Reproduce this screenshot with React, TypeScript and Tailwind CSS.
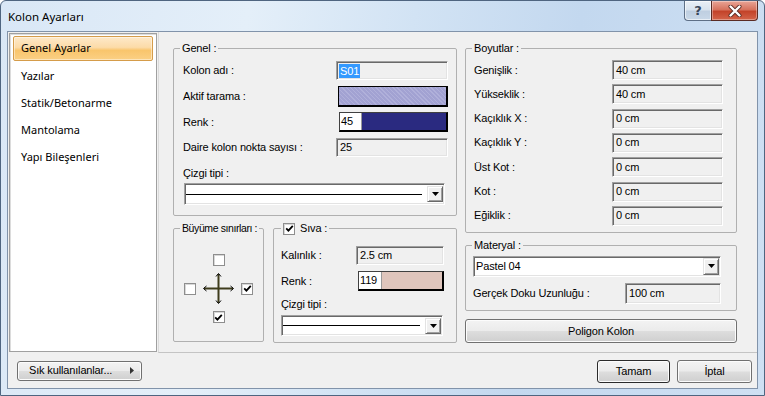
import React from "react";

const sunken =
  "border border-t-[#a0a0a0] border-l-[#a0a0a0] border-r-white border-b-white shadow-[inset_1px_1px_0_#696969,inset_-1px_-1px_0_#e3e3e3]";

function TextBox({ value, className }: { value: string; className: string }) {
  return (
    <div className={`${sunken} bg-[#f0f0f0] flex items-center pl-[3px] text-[11px] leading-none text-black ${className}`}>
      {value}
    </div>
  );
}

function Label({ children }: { children: React.ReactNode }) {
  return <span className="text-[11px] leading-[13px] text-black whitespace-nowrap">{children}</span>;
}

function DropBtn({ className }: { className: string }) {
  return (
    <div
      className={`flex items-center justify-center bg-[#f0f0f0] border border-t-[#e3e3e3] border-l-[#e3e3e3] border-r-[#696969] border-b-[#696969] shadow-[inset_1px_1px_0_#ffffff,inset_-1px_-1px_0_#a0a0a0] ${className}`}
    >
      <svg width="7" height="4" viewBox="0 0 7 4">
        <path d="M0 0H7L3.5 4Z" fill="#000" />
      </svg>
    </div>
  );
}

function LineCombo({ className }: { className: string }) {
  return (
    <div className={`${sunken} bg-white flex items-center pr-[1px] ${className}`}>
      <div className="flex-1 h-px bg-black ml-[1px] mr-[5px]" />
      <DropBtn className="w-[16px] h-[16px]" />
    </div>
  );
}

function Check({ checked }: { checked: boolean }) {
  return (
    <div className="w-[12px] h-[12px] bg-white border border-[#8e8e8e] shadow-[inset_1px_1px_0_#d8d8d8] flex items-center justify-center">
      {checked && (
        <svg width="9" height="9" viewBox="0 0 9 9">
          <path d="M1.2 4.4 L3.4 6.6 L7.8 1.8" stroke="#000" strokeWidth="1.8" fill="none" />
        </svg>
      )}
    </div>
  );
}

function ColorBox({ num, color, className, numW }: { num: string; color: string; className: string; numW: string }) {
  return (
    <div className={`flex border-t border-l border-r-2 border-b-2 border-t-[#404040] border-l-[#404040] border-r-black border-b-black ${className}`}>
      <div className={`bg-white flex items-center pl-[1px] text-[11px] leading-none text-black border-r border-[#9a9a9a] ${numW}`}>{num}</div>
      <div className="flex-1" style={{ backgroundColor: color }} />
    </div>
  );
}

function WinButton({ children, className }: { children: React.ReactNode; className: string }) {
  return (
    <div
      className={`flex items-center justify-center rounded-[3px] border border-[#707070] bg-[linear-gradient(180deg,#f3f3f3_0%,#ebebeb_48%,#dddddd_52%,#cfcfcf_100%)] shadow-[inset_0_0_0_1px_#fcfcfc] text-[11px] text-black ${className}`}
    >
      {children}
    </div>
  );
}

const legendCls = "ml-[6px] px-[2px] text-[11px] leading-[13px] text-black whitespace-nowrap";
const groupCls = "border border-[#b0b0b0] rounded-[2px] min-w-0";

export default function App() {
  return (
    <div className="w-[765px] h-[396px] overflow-hidden rounded-t-[6px] border border-[#4f6580] bg-[linear-gradient(100deg,#d9e7f6_0%,#e4eff9_30%,#d2e3f4_50%,#c3d8ef_70%,#cfe0f3_100%)] flex flex-col font-['Liberation_Sans',Arial,sans-serif] tracking-[-0.15px]">
      {/* title bar */}
      <div className="h-[30px] shrink-0 flex items-start">
        <span className="mt-[8px] ml-[7px] text-[11.5px] leading-[16px] tracking-normal text-black font-['Noto_Sans',sans-serif]">
          Kolon Ayarları
        </span>
        <div className="ml-auto mr-[6px] flex h-[20px]">
          <div className="w-[27px] h-[20px] flex items-center justify-center border border-t-0 border-r-0 border-[#5e6f86] rounded-bl-[4px] bg-[linear-gradient(180deg,#e9eff6_0%,#d9e3ee_45%,#bfcfe1_55%,#c9d8e8_100%)] shadow-[inset_0_0_0_1px_rgba(255,255,255,0.6)]">
            <span className="text-[13px] font-bold leading-none text-[#3a4658] font-['DejaVu_Sans',sans-serif]">?</span>
          </div>
          <div className="w-[47px] h-[20px] flex items-center justify-center border border-t-0 border-[#5a2b24] rounded-br-[4px] bg-[linear-gradient(180deg,#e9a597_0%,#d7735e_45%,#c3432a_55%,#d3644a_100%)] shadow-[inset_0_0_0_1px_rgba(255,255,255,0.35)]">
            <svg width="14" height="12" viewBox="0 0 14 12">
              <path d="M2.5 1.5 L11.5 10.5 M11.5 1.5 L2.5 10.5" stroke="#5a2b24" strokeWidth="4" strokeLinecap="round" />
              <path d="M2.5 1.5 L11.5 10.5 M11.5 1.5 L2.5 10.5" stroke="#ffffff" strokeWidth="2.4" strokeLinecap="round" />
            </svg>
          </div>
        </div>
      </div>

      {/* client area */}
      <div className="mx-[6px] h-[358px] shrink-0 border border-[#8193aa] bg-[#f0f0f0] flex flex-col">
        <div className="flex h-[321px]">
          {/* sidebar */}
          <div className="mt-[1px] ml-[1px] w-[148px] h-[319px] border border-[#a0a0a0] bg-white shadow-[inset_1px_1px_0_#dcdcdc] px-[3px] pt-[2px] font-['Noto_Sans',sans-serif] tracking-normal text-[11px] text-black">
            <div className="h-[25px] mb-[2px] flex items-center pl-[7px] rounded-[2px] border border-[#d59c4a] bg-[linear-gradient(180deg,#fee9c9_0%,#fcdba8_45%,#f9c56c_58%,#fbd085_100%)] shadow-[inset_0_0_0_1px_rgba(255,255,255,0.45)]">
              Genel Ayarlar
            </div>
            <div className="h-[27px] flex items-center pl-[8px]">Yazılar</div>
            <div className="h-[27px] flex items-center pl-[8px]">Statik/Betonarme</div>
            <div className="h-[27px] flex items-center pl-[8px]">Mantolama</div>
            <div className="h-[27px] flex items-center pl-[8px]">Yapı Bileşenleri</div>
          </div>

          {/* content */}
          <div className="ml-[1px] flex-1 h-[321px] border-l border-b border-l-[#dadada] border-b-[#c4c4c4] pl-[14px] pt-[10px] flex gap-[8px]">
            {/* left column */}
            <div className="w-[284px] flex flex-col">
              <fieldset className={`${groupCls} w-[284px]`}>
                <legend className={legendCls}>Genel :</legend>
                <div className="pl-[9px] pr-[8px] pt-[6px] pb-[10px]">
                  <div className="flex items-center justify-between h-[19px]">
                    <Label>Kolon adı :</Label>
                    <div className={`${sunken} bg-[#f0f0f0] w-[112px] h-[19px] flex items-center pl-[2px]`}>
                      <span className="bg-[#3399ff] text-white text-[11px] leading-[14px] px-[1px]">S01</span>
                    </div>
                  </div>
                  <div className="flex items-center justify-between h-[21px] mt-[6px]">
                    <Label>Aktif tarama :</Label>
                    <div className="w-[110px] h-[21px] border-t border-l border-r-2 border-b-2 border-black bg-[repeating-linear-gradient(45deg,#a2a2d2_0px,#a2a2d2_2px,#b0b0da_2px,#b0b0da_3px)]" />
                  </div>
                  <div className="flex items-center justify-between h-[20px] mt-[5px]">
                    <Label>Renk :</Label>
                    <ColorBox num="45" color="#2a2a80" className="w-[109px] h-[20px]" numW="w-[22px]" />
                  </div>
                  <div className="flex items-center justify-between h-[19px] mt-[6px]">
                    <Label>Daire kolon nokta sayısı :</Label>
                    <TextBox value="25" className="w-[112px] h-[19px] pl-[2px]" />
                  </div>
                  <div className="mt-[10px] h-[13px] flex items-center">
                    <Label>Çizgi tipi :</Label>
                  </div>
                  <LineCombo className="mt-[3px] ml-[1px] w-[261px] h-[22px]" />
                </div>
              </fieldset>

              <div className="mt-[6px] flex gap-[9px]">
                <fieldset className={`${groupCls} w-[91px] h-[120px]`}>
                  <legend className="ml-[6px] px-[2px] text-[10.5px] leading-[13px] tracking-[-0.4px] text-black whitespace-nowrap">
                    Büyüme sınırları :
                  </legend>
                  <div className="pt-[19px] flex justify-center">
                    <div className="grid grid-cols-[12px_33px_12px] grid-rows-[12px_33px_12px] gap-[6px] items-center justify-items-center">
                      <div />
                      <Check checked={false} />
                      <div />
                      <Check checked={false} />
                      <svg width="33" height="33" viewBox="0 0 33 33">
                        <path d="M2 16.5H31 M16.5 2V31" stroke="#3e3c1c" strokeWidth="2" />
                        <path
                          d="M4.5 14 L1.5 16.5 L4.5 19 M28.5 14 L31.5 16.5 L28.5 19 M14 4.5 L16.5 1.5 L19 4.5 M14 28.5 L16.5 31.5 L19 28.5"
                          stroke="#000"
                          strokeWidth="1"
                          fill="none"
                        />
                      </svg>
                      <Check checked={true} />
                      <div />
                      <Check checked={true} />
                      <div />
                    </div>
                  </div>
                </fieldset>

                <fieldset className={`${groupCls} w-[184px] h-[121px]`}>
                  <legend className="ml-[7px] px-[2px] flex items-center gap-[5px] text-[11px] leading-[13px] text-black">
                    <Check checked={true} />
                    <span>Sıva :</span>
                  </legend>
                  <div className="pl-[7px] pr-[12px] pt-[11px]">
                    <div className="flex items-center justify-between h-[19px]">
                      <Label>Kalınlık :</Label>
                      <TextBox value="2.5 cm" className="w-[88px] h-[19px] pl-[2px]" />
                    </div>
                    <div className="flex items-center justify-between h-[20px] mt-[6px]">
                      <Label>Renk :</Label>
                      <ColorBox num="119" color="#dfc5bc" className="w-[86px] h-[20px]" numW="w-[23px]" />
                    </div>
                    <div className="mt-[7px] h-[13px] flex items-center">
                      <Label>Çizgi tipi :</Label>
                    </div>
                    <LineCombo className="mt-[4px] w-[162px] h-[21px]" />
                  </div>
                </fieldset>
              </div>
            </div>

            {/* right column */}
            <div className="w-[272px] flex flex-col">
              <fieldset className={`${groupCls} w-[272px]`}>
                <legend className={legendCls}>Boyutlar :</legend>
                <div className="pl-[8px] pr-[13px] pt-[5px] pb-[6px] flex flex-col gap-[4.33px]">
                  {[
                    ["Genişlik :", "40 cm"],
                    ["Yükseklik :", "40 cm"],
                    ["Kaçıklık X :", "0 cm"],
                    ["Kaçıklık Y :", "0 cm"],
                    ["Üst Kot :", "0 cm"],
                    ["Kot :", "0 cm"],
                    ["Eğiklik :", "0 cm"],
                  ].map(([l, v]) => (
                    <div key={l} className="flex items-center justify-between h-[20px]">
                      <Label>{l}</Label>
                      <TextBox value={v} className="w-[111px] h-[20px]" />
                    </div>
                  ))}
                </div>
              </fieldset>

              <fieldset className={`${groupCls} mt-[6px] w-[272px]`}>
                <legend className={legendCls}>Materyal :</legend>
                <div className="pl-[7px] pr-[15px] pt-[4px] pb-[6px]">
                  <div className={`${sunken} bg-white w-[248px] h-[21px] flex items-center pl-[2px] pr-[1px]`}>
                    <span className="flex-1 text-[11px] leading-none text-black">Pastel 04</span>
                    <DropBtn className="w-[16px] h-[17px]" />
                  </div>
                  <div className="mt-[6px] flex items-center justify-between h-[21px]">
                    <Label>Gerçek Doku Uzunluğu :</Label>
                    <TextBox value="100 cm" className="w-[96px] h-[21px]" />
                  </div>
                </div>
              </fieldset>

              <WinButton className="mt-[8px] w-[272px] h-[24px]">Poligon Kolon</WinButton>
            </div>
          </div>
        </div>

        {/* bottom bar */}
        <div className="h-[35px] flex items-center">
          <WinButton className="ml-[9px] w-[125px] h-[20px] !justify-start pl-[11px] pr-[7px]">
            <span className="flex-1">Sık kullanılanlar...</span>
            <svg width="4" height="7" viewBox="0 0 4 7">
              <path d="M0 0L4 3.5L0 7Z" fill="#333" />
            </svg>
          </WinButton>
          <div className="ml-auto mr-[5px] flex gap-[7px] mt-[2px]">
            <WinButton className="w-[73px] h-[23px] !border-[#2b2b2b] shadow-[inset_0_0_0_1px_#8a8a8a]">Tamam</WinButton>
            <WinButton className="w-[75px] h-[23px]">İptal</WinButton>
          </div>
        </div>
      </div>
    </div>
  );
}
